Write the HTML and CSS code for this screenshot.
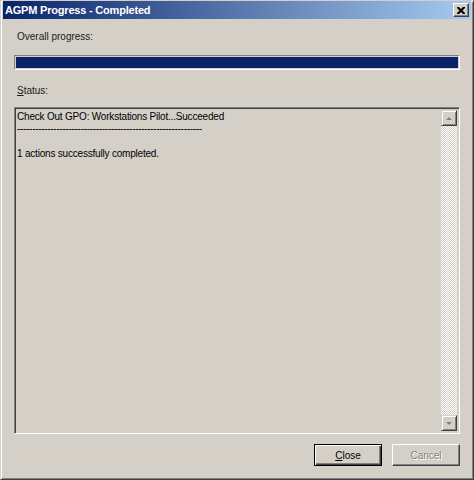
FILE: index.html
```html
<!DOCTYPE html>
<html lang="en">
<head>
    <meta charset="UTF-8">
    <title>AGPM Progress - Completed</title>
    <link rel="stylesheet" href="styles.css">
</head>
<body>

    <div class="window">
        <div class="titlebar">
            <span class="title">AGPM Progress - Completed</span>
            <button class="title-close" aria-label="Close">
                <svg width="8" height="7" viewBox="0 0 8 7">
                    <path d="M0 0h2l2 2 2-2h2v1l-2.5 2.5L8 6v1H6L4 5 2 7H0V6l2.5-2.5L0 1z" fill="#000"/>
                </svg>
            </button>
        </div>

        <div class="content">
            <div class="label">Overall progress:</div>
            <div class="progress"><div class="progress-fill" style="width: 100%"></div></div>

            <div class="label status-label"><u>S</u>tatus:</div>
            <div class="statusbox">
                <div class="status-text">
                    <div>Check Out GPO: Workstations Pilot...Succeeded</div>
                    <div class="dashes">-------------------------------------------------------------</div>
                    <div>&nbsp;</div>
                    <div>1 actions successfully completed.</div>
                </div>
                <div class="scrollbar">
                    <div class="scroll-btn"><span class="arrow up"></span></div>
                    <div class="scroll-track"></div>
                    <div class="scroll-btn"><span class="arrow down"></span></div>
                </div>
            </div>

            <div class="buttons">
                <button class="btn default"><u>C</u>lose</button>
                <button class="btn" disabled>Cancel</button>
            </div>
        </div>
    </div>

</body>
</html>
```

FILE: styles.css
```css
body {
    margin: 0;
    font-family: "Liberation Sans", Arial, sans-serif;
    font-size: 10px;
    color: #000;
    background-color: #d4d0c8;
}
.window {
    width: 474px;
    height: 480px;
    box-sizing: border-box;
    border: 1px solid;
    border-color: #d4d0c8 #404040 #404040 #d4d0c8;
    box-shadow: inset 1px 1px #fff, inset -1px -1px #808080;
    padding: 0 2px 2px 2px;
    display: flex;
    flex-direction: column;
    background-color: #d4d0c8;
}
.titlebar {
    height: 18px;
    display: flex;
    align-items: center;
    justify-content: space-between;
    padding: 0 2px 0 2px;
    background: linear-gradient(to right, #0a246a, #a6caf0);
}
.title {
    color: #fff;
    font-weight: bold;
    font-size: 11px;
    letter-spacing: -0.2px;
}
.title-close {
    width: 16px;
    height: 14px;
    padding: 0;
    margin: 0;
    display: flex;
    align-items: center;
    justify-content: center;
    background-color: #d4d0c8;
    border: 1px solid;
    border-color: #fff #404040 #404040 #fff;
    box-shadow: inset -1px -1px #808080;
}
.content {
    flex: 1;
    display: flex;
    flex-direction: column;
    padding: 11px 11px 0 11px;
}
.label {
    height: 14px;
    line-height: 14px;
    padding-left: 3px;
    color: #202020;
}
.progress {
    margin-top: 11px;
    height: 15px;
    box-sizing: border-box;
    border: 1px solid;
    border-color: #808080 #fff #fff #808080;
    padding: 1px;
}
.progress-fill {
    height: 100%;
    background-color: #0a2266;
}
.status-label {
    margin-top: 14px;
}
.statusbox {
    margin-top: 9px;
    height: 327px;
    box-sizing: border-box;
    border: 1px solid;
    border-color: #808080 #fff #fff #808080;
    box-shadow: inset 1px 1px #404040, inset -1px -1px #d4d0c8;
    padding: 2px;
    display: flex;
    background-color: #d4d0c8;
}
.status-text {
    flex: 1;
    padding: 1px 0 0 0;
    line-height: 12.5px;
    letter-spacing: -0.2px;
}
.dashes {
    letter-spacing: -0.3px;
    line-height: 10px;
    height: 12px;
}
.scrollbar {
    width: 16px;
    display: flex;
    flex-direction: column;
}
.scroll-btn {
    height: 16px;
    box-sizing: border-box;
    border: 1px solid;
    border-color: #d4d0c8 #404040 #404040 #d4d0c8;
    box-shadow: inset 1px 1px #fff, inset -1px -1px #808080;
    display: flex;
    align-items: center;
    justify-content: center;
    background-color: #d4d0c8;
}
.arrow {
    width: 0;
    height: 0;
    border-left: 3px solid transparent;
    border-right: 3px solid transparent;
}
.arrow.up {
    border-bottom: 3px solid #808080;
}
.arrow.down {
    border-top: 3px solid #808080;
}
.scroll-track {
    flex: 1;
    background: repeating-conic-gradient(#fff 0 25%, #d4d0c8 0 50%) 0 0 / 2px 2px;
}
.buttons {
    margin-top: 10px;
    display: flex;
    justify-content: flex-end;
    gap: 10px;
}
.btn {
    width: 68px;
    height: 22px;
    padding: 0;
    font-family: "Liberation Sans", Arial, sans-serif;
    font-size: 10px;
    color: #000;
    background-color: #d4d0c8;
    border: 1px solid;
    border-color: #fff #404040 #404040 #fff;
    box-shadow: inset -1px -1px #808080;
}
.btn.default {
    border: 1px solid #000;
    box-shadow: inset 1px 1px #fff, inset -1px -1px #404040, inset -2px -2px #808080;
}
.btn:disabled {
    color: #808080;
    text-shadow: 1px 1px #fff;
}
```
